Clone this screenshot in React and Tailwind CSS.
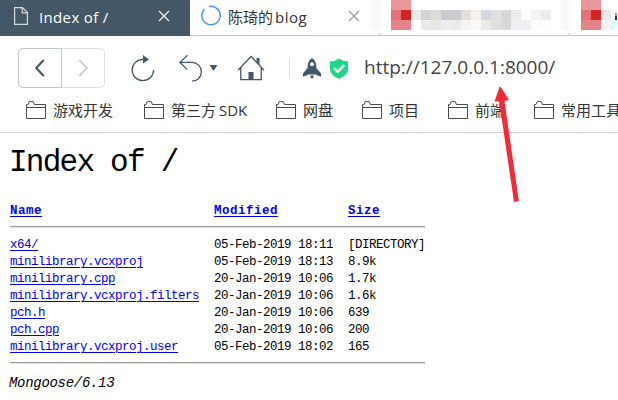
const UI = "font-['Open_Sans','Noto_Sans_CJK_SC',sans-serif]";
const MONO = "font-['Liberation_Mono',monospace]";

const mosaicA = [
  ['#e9969b', '#ea989d', '', '', '', '', '', '', '', '', '', '', '', '', '', ''],
  ['#e27277', '#d32424', '#efebe8', '#d3d3d4', '#dcdcdd', '#c9cbce', '#cacccf', '#e1dedc', '#f4f1ef', '#d3d7de', '#dfe0df', '#d7d7d7', '#eaecef', '', '#f3f5f8', '#eaecef'],
  ['#e58288', '#e58288', '', '#eaeaea', '#e7e7e7', '#eaeeee', '#e7ebec', '#f4f4f2', '#fafafa', '#e9e9e7', '#dfdfdc', '#d8d8d6', '#eff0f2', '#eff0f3', '#fafbfc', '#fcfdfe'],
];
const mosaicB = [
  ['#e9969b', '#ea989d', ''],
  ['#e27277', '#d32424', '#ebe7e6'],
  ['#e58288', '#e58288', '#f6f3f2'],
];

function Mosaic({ rows }) {
  return (
    <div className="flex shrink-0 flex-col">
      {rows.map((r, i) => (
        <div key={i} className="flex">
          {r.map((c, j) => (
            <div key={j} className="size-[10px]" style={{ backgroundColor: c || '#fff' }} />
          ))}
        </div>
      ))}
    </div>
  );
}

function Close({ color }) {
  return (
    <svg className="block shrink-0" width="12" height="12" viewBox="0 0 12 12" fill="none" stroke={color} strokeWidth="1.3">
      <path d="M1 1L11 11M11 1L1 11" />
    </svg>
  );
}

function Tabs() {
  return (
    <div className="flex h-[36px] items-start">
      <div className="flex h-[36px] w-[190px] shrink-0 bg-[#435766] pl-[14px]">
        <svg className="mt-[7px] shrink-0" width="14" height="18" viewBox="0 0 14 18" fill="none" stroke="#d5dadd" strokeWidth="1.2">
          <path d="M.6.6H8.5L13.4 5.5V17.4H.6ZM8.2.6V5.8H13.4" />
        </svg>
        <div className={`${UI} ml-[11px] w-[119px] text-[15px] leading-[35px] tracking-[0.35px] whitespace-nowrap text-white`}>Index of /</div>
        <div className="pt-[10px]"><Close color="#f1f3f4" /></div>
      </div>
      <div className="flex h-[36px] grow border-b border-[#c3c7cc]">
        <svg className="mt-[5px] ml-[11px] shrink-0" width="20" height="21" viewBox="0 0 20 21" fill="none" stroke="#4b94ec" strokeWidth="1.4">
          <path d="M8 1.5A9.2 9.2 0 1 1 3.5 4" />
        </svg>
        <div className={`${UI} ml-[7px] flex w-[120px] gap-[2px] text-[15px] leading-[34px] whitespace-nowrap text-[#333]`}>
          <span>陈琦的</span><span className="tracking-[0.5px]">blog</span>
        </div>
        <div className="w-[12px] shrink-0 pt-[10px]"><Close color="#969da3" /></div>
        <div className="ml-[11px] h-[30px] w-[10px] shrink-0 bg-[#f9f9f9]" />
        <div className="ml-[-2px] h-[2px] w-px shrink-0 self-end bg-[#c3c7cc]" />
        <div className="ml-[11px] flex"><Mosaic rows={mosaicA} /></div>
        <div className="ml-[10px] h-[30px] w-[10px] shrink-0 bg-[#f9f9f9]" />
        <div className="ml-[-2px] h-[2px] w-px shrink-0 self-end bg-[#c3c7cc]" />
        <div className="ml-[11px] flex"><Mosaic rows={mosaicB} /></div>
        <div className="mt-[13px] flex w-[7px] flex-col">
          <div className="ml-[4px] h-[3px] w-[2px] bg-[#8c99b0]" />
          <div className="ml-[4px] h-[4px] w-[2px] bg-[#25374c]" />
          <div className="h-[10px] w-[4px] bg-[#cffefe]" />
        </div>
      </div>
    </div>
  );
}

function Toolbar() {
  return (
    <div className="flex h-[64px] shrink-0 pl-[18px]">
      <div className="mt-[12px] flex h-[40px] w-[87px] shrink-0 rounded-[5px] border border-[#dde0e3]">
        <div className="-m-px flex h-[40px] w-[44px] items-center justify-center rounded-l-[5px] border border-[#bfc7cd]">
          <svg width="10" height="18" viewBox="0 0 10 18" fill="none" stroke="#435766" strokeWidth="2"><path d="M8.8 1L1.2 9L8.8 17" /></svg>
        </div>
        <div className="flex grow items-center justify-center">
          <svg width="10" height="18" viewBox="0 0 10 18" fill="none" stroke="#cbd1d5" strokeWidth="2"><path d="M1.2 1L8.8 9L1.2 17" /></svg>
        </div>
      </div>
      <svg className="mt-[18px] ml-[26px] shrink-0" width="24" height="29" viewBox="0 0 24 29">
        <path d="M12 5.3A10.7 10.7 0 1 0 22.6 16" fill="none" stroke="#435766" strokeWidth="1.3" />
        <path d="M12 1L18 5.4L12 9.5Z" fill="#435766" />
      </svg>
      <svg className="mt-[18px] ml-[23px] shrink-0" width="42" height="29" viewBox="0 0 42 29">
        <path d="M9.5 1.3L2 8.4L9.5 15.6M2 8.4H14A9.2 9.2 0 0 1 14 27.2" fill="none" stroke="#435766" strokeWidth="1.3" />
        <path d="M31.5 11H39.5L35.5 17Z" fill="#435766" />
      </svg>
      <svg className="mt-[19px] ml-[17px] shrink-0" width="28" height="26" viewBox="0 0 28 26">
        <path d="M1 15.2L14 1.5L27 15.2M3.8 12.6V24.6H24.3V12.6" fill="none" stroke="#435766" strokeWidth="1.3" />
        <path d="M11.5 17H16.5V24.5H11.5ZM19.5 3H22.5V10L19.5 7Z" fill="#435766" />
      </svg>
      <div className="mt-[22px] ml-[24px] h-[20px] w-px shrink-0 bg-[#dde0e2]" />
      <svg className="mt-[22px] ml-[13px] shrink-0" width="18" height="22" viewBox="0 0 18 22">
        <path d="M9 0C12.2 2.3 13.4 5 13.4 10L18 15.5V18.7L12.3 16.5H5.7L0 18.7V15.5L4.6 10C4.6 5 5.8 2.3 9 0Z" fill="#435766" />
        <circle cx="9" cy="6.3" r="2" fill="white" />
        <path d="M7.4 17.4H10.6V19L9 21L7.4 19Z" fill="#435766" />
      </svg>
      <svg className="mt-[22px] ml-[9px] shrink-0" width="18" height="21" viewBox="0 0 18 21">
        <path d="M9 .5Q13 3.3 18 3.2V11.5Q17.5 17.8 9 20.8Q.5 17.8 0 11.5V3.2Q5 3.3 9 .5Z" fill="#21d58b" />
        <path d="M4 10.2L7.8 13.8L14.2 7" fill="none" stroke="white" strokeWidth="2.5" />
      </svg>
      <div className={`${UI} ml-[16px] pt-[15px] text-[19px] leading-[32px] whitespace-nowrap text-[#444]`}>http://127.0.0.1:8000/</div>
    </div>
  );
}

function Bookmark({ width, children }) {
  return (
    <div className={`flex shrink-0 ${width}`}>
      <svg className="mt-px shrink-0" width="20" height="18" viewBox="0 0 20 18" fill="none" stroke="#4b4b4b">
        <path d="M.5 17.5V3.5H2L3.2.6H7.2L8.5 3.5H19.5V17.5ZM.5 6.5H19.5" />
      </svg>
      <div className={`${UI} ml-[7px] flex gap-[3px] text-[15px] leading-[20px] whitespace-nowrap text-[#333]`}>{children}</div>
    </div>
  );
}

const files = [
  ['x64/', '05-Feb-2019 18:11', '[DIRECTORY]'],
  ['minilibrary.vcxproj', '05-Feb-2019 18:13', '8.9k'],
  ['minilibrary.cpp', '20-Jan-2019 10:06', '1.7k'],
  ['minilibrary.vcxproj.filters', '20-Jan-2019 10:06', '1.6k'],
  ['pch.h', '20-Jan-2019 10:06', '639'],
  ['pch.cpp', '20-Jan-2019 10:06', '200'],
  ['minilibrary.vcxproj.user', '05-Feb-2019 18:02', '165'],
];

const link = 'text-[#0000ee] underline underline-offset-2 decoration-1';

function Rule() {
  return <div className="h-[2px] w-[415px] border-t border-b border-t-[#999] border-b-[#e6e6e6]" />;
}

export default function App() {
  return (
    <div className="relative flex h-[400px] w-[618px] flex-col overflow-hidden bg-white">
      <Tabs />
      <Toolbar />
      <div className="flex h-[33px] shrink-0 border-b border-[#c5ccd2] pl-[26px]">
        <Bookmark width="w-[118px]">游戏开发</Bookmark>
        <Bookmark width="w-[132px]"><span>第三方</span><span>SDK</span></Bookmark>
        <Bookmark width="w-[86px]">网盘</Bookmark>
        <Bookmark width="w-[86px]">项目</Bookmark>
        <Bookmark width="w-[86px]">前端</Bookmark>
        <Bookmark width="w-[90px]">常用工具</Bookmark>
      </div>
      <div className={`${MONO} pl-[10px] text-[12.5px] leading-[17px] tracking-[-0.5px] text-black`}>
        <h1 className="-ml-px h-[70px] pt-[10px] text-[31px] leading-[40px] tracking-[-1.75px]">Index of /</h1>
        <div className="grid h-[23px] grid-cols-[204px_134px_auto] font-bold tracking-[0.5px]">
          <span><a className={link}>Name</a></span>
          <span><a className={link}>Modified</a></span>
          <span><a className={link}>Size</a></span>
        </div>
        <Rule />
        <div className="pt-[9px] pb-[6px]">
          {files.map(([n, d, s]) => (
            <div key={n} className="grid h-[17px] grid-cols-[204px_134px_auto]">
              <span><a className={link}>{n}</a></span>
              <span>{d}</span>
              <span>{s}</span>
            </div>
          ))}
        </div>
        <Rule />
        <address className="-ml-px pt-[11px] text-[14px] tracking-[0.3px] italic"><span className="tracking-[-0.3px]">Mongoose/6.13</span></address>
      </div>
      <svg className="absolute top-[86px] left-[490px]" width="32" height="117" viewBox="0 0 32 117" fill="#f42a36">
        <path d="M9.5 1Q10.5 .5 11.5 2L19 14L14.5 15L28.8 115L24 116L9.2 15.5L4.5 15.5Z" />
      </svg>
    </div>
  );
}
